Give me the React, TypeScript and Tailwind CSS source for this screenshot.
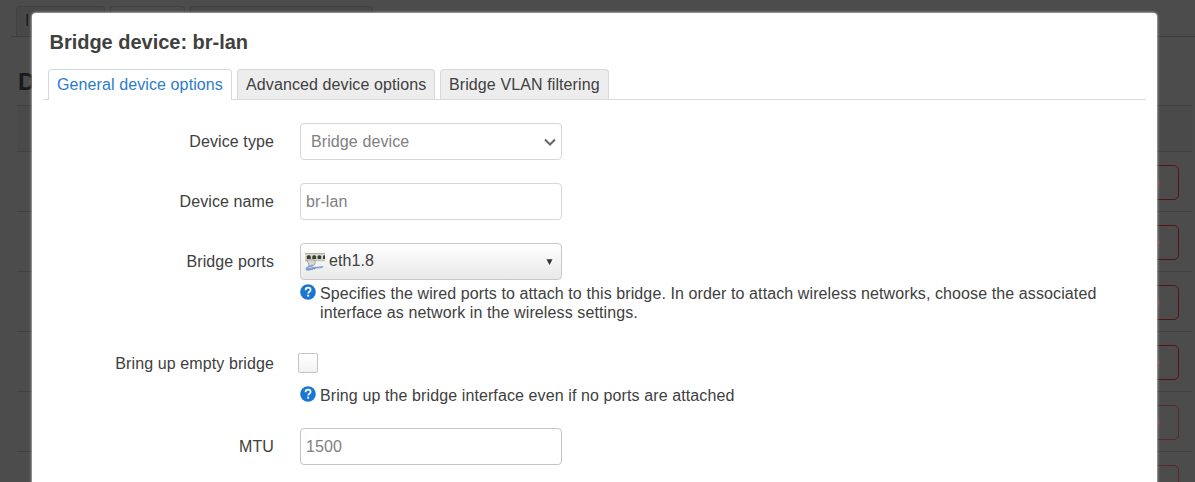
import React from "react";

const resetRows = [
  { strong: true, text: "e" },
  { strong: true, text: "e" },
  { strong: true, text: "e" },
  { strong: true, text: "e" },
  { strong: false, text: "e" },
  { strong: false, text: "" },
];

function BackgroundPage() {
  return (
    <div className="h-[482px] overflow-hidden bg-[#4c4c4c] pl-[11px] pt-[6px] text-[#1a1a1a]" aria-hidden="true">
      <div className="flex h-[31px] gap-[5px] border-b border-[#3e3e3e] pl-[5px]">
        <div className="w-[89px] rounded-t border border-b-0 border-[#414141] bg-[#484848] pl-[8px] pt-[4px] leading-[20px]">I</div>
        <div className="w-[75px] rounded-t border border-b-0 border-[#414141]" />
        <div className="w-[183px] rounded-t border border-b-0 border-[#414141] bg-[#484848]" />
      </div>
      <div className="ml-[6px] mr-[3px]">
        <div className="h-[68px] pl-px pt-[31px] text-[24px] font-bold leading-[28px]">D</div>
        <div className="h-[46px] border-t border-[#404040] bg-[#4a4a4a]" />
        {resetRows.map((row, i) => (
          <div key={i} className="flex h-[60px] justify-end border-t border-[#404040] pr-[13px] pt-[13px]">
            <div
              className={
                "h-[35px] w-[94px] rounded-[5px] border pr-[18px] text-right leading-[33px] " +
                (row.strong ? "border-[#551313] text-[#943c3c]" : "border-[#542a2a] text-[#804343]")
              }
            >
              {row.text}
            </div>
          </div>
        ))}
      </div>
    </div>
  );
}

function HelpIcon() {
  return (
    <svg className="h-4 w-4 shrink-0" viewBox="0 0 16 16">
      <circle cx="8" cy="8" r="7.8" fill="#1976d2" />
      <path d="M5.5 6.2C5.5 4.6 6.6 3.7 8.1 3.7s2.5.9 2.5 2.2c0 1.8-2.4 1.9-2.4 3.5" fill="none" stroke="#fff" strokeWidth="1.7" />
      <rect x="7.2" y="10.7" width="1.9" height="1.9" fill="#fff" />
    </svg>
  );
}

function PortIcon() {
  return (
    <svg className="h-[20px] w-[20px] shrink-0" viewBox="0 0 20 20">
      <path d="M0 1h20v8H0z" fill="#d9d7cb" />
      <path d="M0 1.5h20" stroke="#b0aea2" />
      <path d="M0 8.7h20" stroke="#b4b4aa" strokeWidth=".8" />
      <g fill="#3b4034">
        <path d="M1.8 7V4.5l1-1.2h2l1 1.2V7z" />
        <path d="M7.3 7V4.5l1-1.2h1.8l1 1.2V7z" />
        <path d="M12.6 7V4.5l1-1.2h1.6l1 1.2V7z" />
        <path d="M18 7V4.5l.8-1.2H20V7z" />
      </g>
      <path d="M1.5 8l2 3 .5 3h4l2-2V8z" fill="#d9d9d0" stroke="#909492" strokeWidth=".8" />
      <path d="M8 13c-3 1.5-7 2.5-6.5 4 3 .6 5.5-1.4 9-1.4 2.5 0 4.500.3 7.500-1" fill="none" stroke="#8aa5d2" strokeWidth="1.9" />
      <path d="M1.500 18c4 .5 6-1.500 9-1.500" fill="none" stroke="#5e83bd" strokeWidth="1" />
    </svg>
  );
}

function Row({ label, height, children }: { label: string; height: string; children: React.ReactNode }) {
  return (
    <div className={"flex " + height}>
      <div className="w-[226px] shrink-0 text-right leading-[38px]">{label}</div>
      <div className="ml-[26px] min-w-0 flex-1">{children}</div>
    </div>
  );
}

function Help({ children }: { children: React.ReactNode }) {
  return (
    <div className="flex gap-1 leading-[19px]">
      <HelpIcon />
      <div>{children}</div>
    </div>
  );
}

export default function App() {
  return (
    <div className="relative h-[482px] overflow-hidden font-['Liberation_Sans',Arial,sans-serif] text-[16px] tracking-[0.104px] text-[#404040]">
      <BackgroundPage />
      <div className="absolute left-[32px] top-[13px] h-[500px] w-[1125px] rounded bg-white pl-[11px] pr-[11px] shadow-[0_0_3px_#fff]">
        <h4 className="pl-[6.5px] pt-[11px] text-[20px] font-bold leading-[36px] tracking-[-0.02px]">Bridge device: br-lan</h4>
        <div className="mt-[9px] flex h-[31px] gap-[5px] border-b border-[#d8dcdc] pl-[5px] leading-[29px]">
          <div className="h-[31px] w-[184px] whitespace-nowrap rounded-t border border-b-0 border-[#d3d9de] bg-white pl-[8px] text-[#2b7ccb]">General device options</div>
          <div className="w-[198px] whitespace-nowrap rounded-t border border-b-0 border-[#d8d8d8] bg-[#ededed] pl-[8px]">Advanced device options</div>
          <div className="w-[169px] whitespace-nowrap rounded-t border border-b-0 border-[#d8d8d8] bg-[#ededed] pl-[8px]">Bridge VLAN filtering</div>
        </div>
        <div className="pl-[5px] pt-[23px]">
          <Row label="Device type" height="h-[60px]">
            <div className="flex h-[37px] w-[262px] items-center justify-between rounded border border-[#d6d6d6] pl-[10px] pr-[5px] text-[#808080]">
              <span>Bridge device</span>
              <svg className="h-3 w-3" viewBox="0 0 12 12" fill="none" stroke="#666" strokeWidth="2">
                <path d="M1 3.5l5 5 5-5" />
              </svg>
            </div>
          </Row>
          <Row label="Device name" height="h-[60px]">
            <div className="h-[37px] w-[262px] rounded border border-[#d6d6d6] pl-[5px] leading-[35px] text-[#808080]">br-lan</div>
          </Row>
          <Row label="Bridge ports" height="h-[102px]">
            <div className="flex h-[37px] w-[262px] items-center rounded border border-[#c8c8c8] bg-linear-to-b from-white to-[#e9e9e9] pl-[4px] pr-[8px]">
              <PortIcon />
              <span className="ml-[4px] flex-1 pb-[2px]">eth1.8</span>
              <svg className="h-[6px] w-[7px]" viewBox="0 0 7 6">
                <path d="M.5 .3h6L3.5 6z" fill="#333" />
              </svg>
            </div>
            <div className="mt-[4px] w-[810px]">
              <Help>
                Specifies the wired ports to attach to this bridge. In order to attach wireless networks, choose the associated
                interface as network in the wireless settings.
              </Help>
            </div>
          </Row>
          <Row label="Bring up empty bridge" height="h-[83px]">
            <div className="ml-[-2px] mt-[8px] h-[20px] w-[20px] rounded-[2px] border border-[#c4c4c4] bg-linear-to-b from-white to-[#f2f2f2]" />
            <div className="mt-[13px]">
              <Help>Bring up the bridge interface even if no ports are attached</Help>
            </div>
          </Row>
          <Row label="MTU" height="h-[60px]">
            <div className="h-[37px] w-[262px] rounded border border-[#c4c4c4] pl-[5px] leading-[35px] text-[#808080]">1500</div>
          </Row>
        </div>
      </div>
    </div>
  );
}
